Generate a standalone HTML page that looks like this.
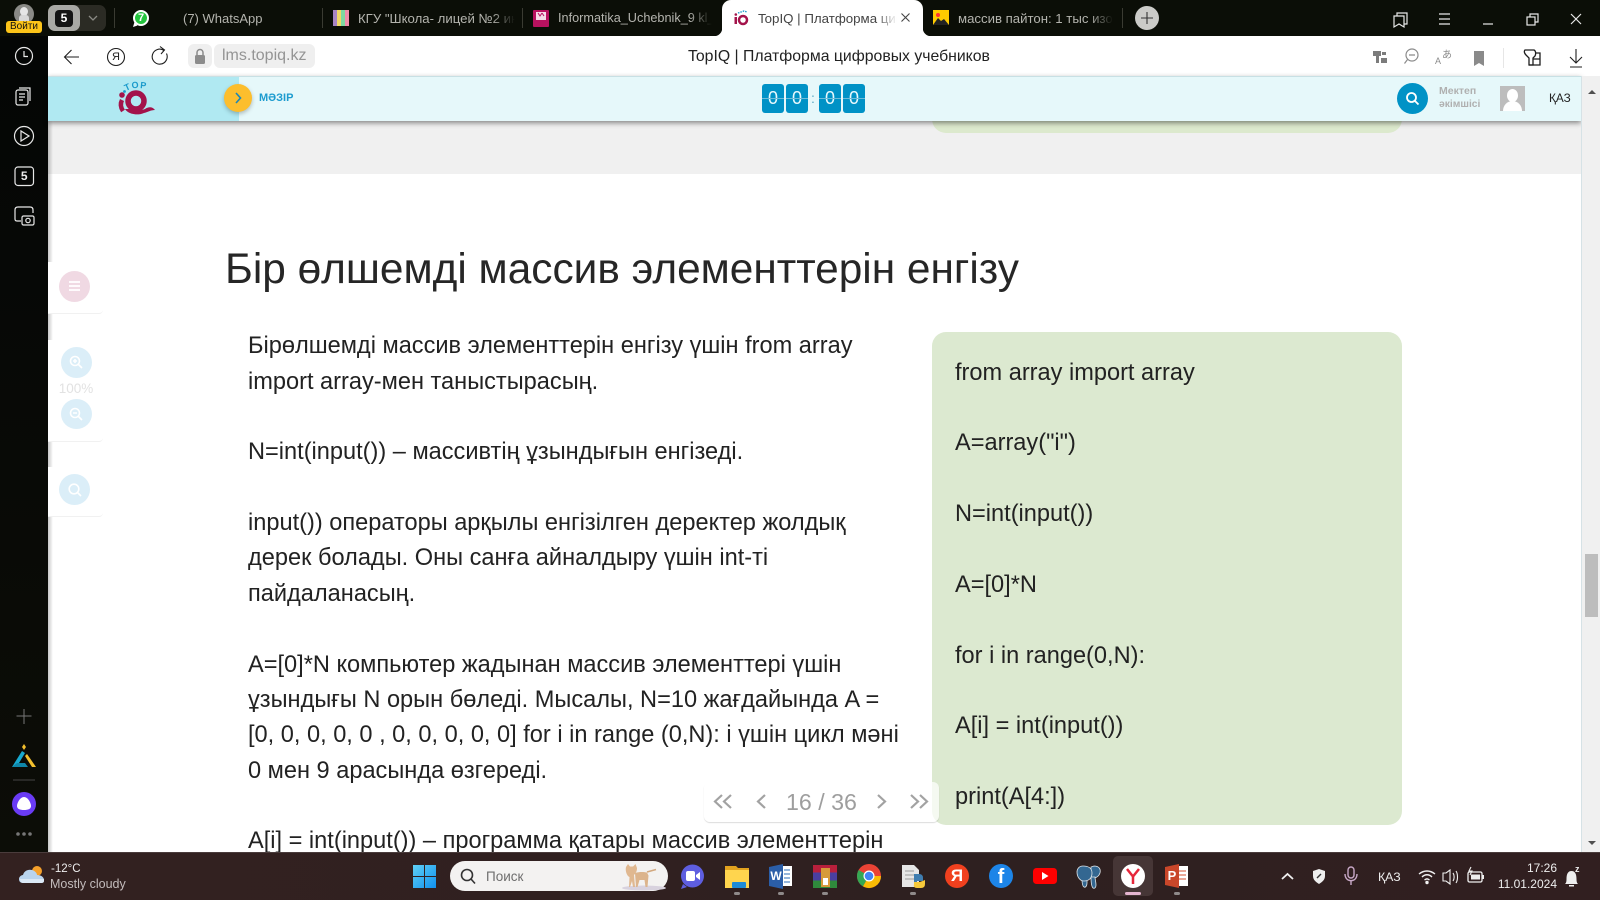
<!DOCTYPE html>
<html lang="kk"><head><meta charset="utf-8"><title>TopIQ</title>
<style>
*{box-sizing:border-box}
html,body{margin:0;padding:0;width:1600px;height:900px;overflow:hidden;background:#fff;font-family:"Liberation Sans",sans-serif}
.a{position:absolute}
svg{position:absolute;overflow:visible}
.t{position:absolute;white-space:nowrap}
.tab{position:absolute;top:10px;font-size:13px;line-height:17px;color:#b4b4ae;white-space:nowrap;overflow:hidden;-webkit-mask-image:linear-gradient(90deg,#000 85%,transparent);mask-image:linear-gradient(90deg,#000 85%,transparent)}
.sep{position:absolute;top:8px;width:1px;height:20px;background:#3a3b32}
.body{position:absolute;font-size:23.580px;line-height:35.36px;color:#222;white-space:nowrap}
.c{position:absolute;border-radius:50%}
.card{position:absolute;left:48px;width:55px;background:#fff;border-bottom:1px solid #f1f1f1;border-radius:0 0 4px 0}
.dig{position:absolute;top:84px;width:22px;height:29px;background:#0092c6;border-radius:3px;color:#e8f8fc;font-size:18px;line-height:29px;text-align:center}
.dig:after{content:"";position:absolute;left:0;right:0;top:14px;height:1px;background:#6dbcd9}
.dot{position:absolute;top:892px;width:6px;height:2.5px;border-radius:2px;background:#8f8a8a}
</style></head><body>

<!-- frame dark -->
<div class="a" style="left:0;top:0;width:1600px;height:36px;background:#0b0e07"></div>
<div class="a" style="left:0;top:36px;width:48px;height:816px;background:linear-gradient(#040605,#0c0d07)"></div>

<!-- top left profile -->
<div class="c" style="left:14px;top:4px;width:20px;height:20px;background:#8a8a86"></div>
<div class="c" style="left:20px;top:7px;width:8px;height:9px;background:#e6e6e6"></div>
<div class="a" style="left:19px;top:15px;width:10px;height:6px;background:#d8d8d8;border-radius:3px 3px 0 0"></div>
<div class="t" style="left:6px;top:21px;width:36px;height:12px;background:#fcc419;border-radius:3px;color:#111;font-size:10px;line-height:12px;text-align:center">Войти</div>

<!-- tab group -->
<div class="a" style="left:48px;top:5px;width:58px;height:26px;background:#2b2b24;border-radius:7px"></div>
<div class="a" style="left:48px;top:5px;width:32px;height:26px;background:#a9a9a5;border-radius:7px"></div>
<div class="t" style="left:55px;top:10px;width:18px;height:17px;background:#141414;border-radius:4px;color:#fff;font-size:12px;font-weight:bold;line-height:17px;text-align:center">5</div>
<svg style="left:0;top:0" width="1" height="1"><path d="M89 16l4 4 4-4" fill="none" stroke="#8a8a84" stroke-width="1.3"/></svg>
<div class="sep" style="left:114px"></div>

<!-- whatsapp -->
<div class="c" style="left:133px;top:10px;width:16px;height:16px;background:#25c53f;border:2px solid #fff"></div>
<svg style="left:0;top:0" width="1" height="1"><path d="M133 27l1.500-5 3 3.500z" fill="#fff"/></svg>
<div class="t" style="left:133px;top:10px;width:16px;text-align:center;font-size:11px;font-weight:bold;line-height:16px;color:#fff">7</div>
<div class="tab" style="left:183px;width:90px;-webkit-mask-image:none;mask-image:none">(7) WhatsApp</div>
<div class="sep" style="left:322px"></div>

<!-- kgu -->
<svg style="left:333px;top:10px" width="16" height="16"><rect x="0" width="4" height="16" fill="#a884c4"/><rect x="4" width="4" height="16" fill="#f0d868"/><rect x="8" width="4" height="16" fill="#7ed8a0"/><rect x="12" width="4" height="16" fill="#f08caa"/></svg>
<div class="tab" style="left:358px;width:157px;font-size:13.200px">КГУ "Школа- лицей №2 ин</div>
<div class="sep" style="left:522px"></div>

<!-- pdf -->
<svg style="left:533px;top:10px" width="16" height="16"><rect width="16" height="17" rx="1" fill="#b8125f"/><rect x="3" y="2" width="10" height="8" fill="#f5dce8"/><path d="M5 3l2 3 2-3M9 3l2 3" stroke="#b8125f" fill="none"/></svg>
<div class="tab" style="left:558px;width:154px;font-size:12.700px">Informatika_Uchebnik_9 kl_</div>

<!-- active tab -->
<div class="a" style="left:722px;top:0;width:201px;height:36px;background:#fff;border-radius:9px 9px 0 0"></div>
<div class="a" style="left:714px;top:28px;width:8px;height:8px;background:radial-gradient(circle at 0 0,#0b0e07 8px,#fff 8.5px)"></div>
<div class="a" style="left:923px;top:28px;width:8px;height:8px;background:radial-gradient(circle at 100% 0,#0b0e07 8px,#fff 8.5px)"></div>
<svg style="left:733px;top:10px" width="16" height="16" viewBox="0 0 16 16"><circle cx="10" cy="10" r="4" fill="none" stroke="#a3134b" stroke-width="2.5"/><rect x="1.500" y="7" width="2.500" height="7" fill="#a3134b"/><circle cx="2.800" cy="4.500" r="1.300" fill="#a3134b"/><path d="M5 3l3-1 3-1 3 1" stroke="#1a9acb" fill="none" stroke-width="1.400" stroke-dasharray="1.500 1"/></svg>
<div class="tab" style="left:758px;width:139px;color:#444;font-size:13.300px">TopIQ | Платформа цифровых</div>
<svg style="left:0;top:0" width="1" height="1"><path d="M901.500 13.500l8 8m0-8l-8 8" stroke="#444" stroke-width="1.100"/></svg>

<!-- yandex images tab -->
<svg style="left:933px;top:10px" width="16" height="16"><rect width="16" height="15" fill="#ffcc00"/><path d="M0 15l5-7 3 3 3-2 5 6z" fill="#222"/><circle cx="5" cy="5" r="2" fill="#f33"/></svg>
<div class="tab" style="left:958px;width:155px;font-size:13.200px">массив пайтон: 1 тыс изображений</div>
<div class="sep" style="left:1122px"></div>
<div class="c" style="left:1135px;top:6px;width:24px;height:24px;background:#cbcbc8"></div>
<svg style="left:0;top:0" width="1" height="1"><path d="M1147 12v12M1141 18h12" stroke="#333" stroke-width="1.100"/></svg>

<!-- window controls -->
<svg style="left:0;top:0" width="1" height="1" fill="none" stroke="#e8e8e8" stroke-width="1.200">
<path d="M1394 16h10v11l-5-3-5 3z"/><path d="M1397 16v-3h10v11h-3"/>
<path d="M1439 14h11M1439 19h11M1439 24h11"/>
<path d="M1483 24h10"/>
<rect x="1527" y="17" width="8" height="8"/><path d="M1530 17v-3h8v8h-3"/>
<path d="M1571 14l10 10m0-10l-10 10"/>
</svg>

<!-- chrome white -->
<div class="a" style="left:48px;top:36px;width:1552px;height:40px;background:#fff;border-radius:9px 9px 0 0"></div>
<svg style="left:0;top:0" width="1" height="1" fill="none" stroke="#1e1e1e" stroke-width="1.100">
<path d="M79 57H65M71.500 50l-7 7 7 7"/>
<circle cx="116" cy="57" r="8.500"/>
<path d="M166.500 53.500a7.500 7.500 0 1 1-2.500-3M160 46.500l4.500 3.500-3.500 4"/>
</svg>
<div class="t" style="left:108px;top:49px;width:16px;text-align:center;font-size:11px;line-height:16px;color:#222">Я</div>
<div class="a" style="left:188px;top:44px;width:24px;height:24px;background:#efefef;border-radius:6px"></div>
<svg style="left:0;top:0" width="1" height="1"><rect x="195" y="55" width="10" height="9" rx="1.500" fill="#8c8c8c"/><path d="M197 55v-2.500a3 3 0 0 1 6 0V55" fill="none" stroke="#8c8c8c" stroke-width="1.500"/></svg>
<div class="t" style="left:214px;top:44px;width:101px;height:24px;background:#efefef;border-radius:6px;color:#949494;font-size:16px;line-height:24px;padding-left:8px">lms.topiq.kz</div>
<div class="t" style="left:688px;top:47px;font-size:15.800px;line-height:20px;color:#222">TopIQ | Платформа цифровых учебников</div>

<svg style="left:0;top:0" width="1" height="1" fill="none" stroke="#8b8b8b" stroke-width="1.200">
<path d="M1373 51h8v5h-2v7h-3v-7h-3z" fill="#7c7c7c" stroke="none"/><rect x="1381" y="58" width="6" height="5" fill="#7c7c7c" stroke="none"/><rect x="1382" y="52" width="4" height="3" fill="#7c7c7c" stroke="none"/>
<circle cx="1412" cy="55" r="6"/><path d="M1409 55h6M1407.500 59.500l-3 4"/>
<path d="M1474 51h10v15l-5-3-5 3z" fill="#8a8a8a" stroke="none"/>
</svg>
<div class="t" style="left:1435px;top:56px;font-size:9px;line-height:11px;color:#8b8b8b">A</div>
<div class="t" style="left:1442px;top:48px;font-size:10px;line-height:12px;color:#8b8b8b;font-family:'Noto Sans CJK JP',sans-serif">あ</div>
<div class="a" style="left:1503px;top:48px;width:1px;height:20px;background:#e6e6e6"></div>
<svg style="left:0;top:0" width="1" height="1" fill="none" stroke="#1e1e1e" stroke-width="1.300">
<path d="M1525 50h9c2 1 2 4 1 6l-2 2v7h-4v-7l-3-3c-2-2-2-4-1-5z"/><path d="M1535 53h5v12h-11M1533 59h7"/>
<path d="M1576 49v14M1570 57l6 6 6-6M1570 67h12" stroke-width="1.100"/>
</svg>

<!-- page -->
<div class="a" style="left:48px;top:76px;width:1533px;height:98px;background:#f0f0f0"></div>
<div class="a" style="left:932px;top:76px;width:470px;height:57px;background:#dce9cd;border-radius:0 0 14px 14px"></div>
<div class="a" style="left:48px;top:174px;width:1533px;height:678px;background:#fff"></div>
<div class="a" style="left:48px;top:121px;width:5px;height:731px;background:linear-gradient(90deg,rgba(0,0,0,.22),transparent)"></div>

<!-- header -->
<div class="a" style="left:48px;top:76px;width:1533px;height:45px;background:#e6f8fa;border-top:1px solid #c8e0e4;box-shadow:0 2px 5px rgba(0,0,0,.45)"></div>
<div class="a" style="left:48px;top:77px;width:191px;height:44px;background:#b0e9f2"></div>
<svg style="left:100px;top:76px" width="70" height="45" viewBox="0 0 70 45">
<circle cx="22" cy="19" r="2.800" fill="#a3134b"/>
<path d="M22 24c-2 4-1 8 1 11" stroke="#a3134b" stroke-width="4.500" fill="none"/>
<circle cx="36" cy="25" r="8" fill="none" stroke="#a3134b" stroke-width="5.500"/>
<path d="M25 33c3 5 12 7 19 4 4-1 7-3 11-3-3-4-7-3-10-1-3 1-5 1-7 0" fill="#a3134b"/>
<circle cx="24.500" cy="15.500" r="1.400" fill="#1a9acb"/>
<text x="26" y="15" font-size="9" font-weight="bold" fill="#1a9acb" transform="rotate(-25 26 15)" font-family="Liberation Sans">T</text>
<text x="32" y="12.500" font-size="9" font-weight="bold" fill="#1a9acb" transform="rotate(-8 32 12.500)" font-family="Liberation Sans">O</text>
<text x="40" y="12" font-size="9" font-weight="bold" fill="#1a9acb" transform="rotate(6 40 12)" font-family="Liberation Sans">P</text>
</svg>
<div class="c" style="left:224px;top:84px;width:28px;height:28px;background:#fcbe2d;box-shadow:0 2px 4px rgba(0,0,0,.25)"></div>
<svg style="left:0;top:0" width="1" height="1"><path d="M236 93l4.500 5-4.500 5" fill="none" stroke="#1a86b8" stroke-width="1.600"/></svg>
<div class="t" style="left:259px;top:91px;font-size:11px;font-weight:bold;line-height:14px;color:#1d9ccf">МӘЗІР</div>
<div class="dig" style="left:762px">0</div><div class="dig" style="left:786px">0</div>
<div class="t" style="left:811px;top:88px;font-size:14px;line-height:20px;color:#5aa9c4">:</div>
<div class="dig" style="left:819px">0</div><div class="dig" style="left:843px">0</div>
<div class="c" style="left:1397px;top:83px;width:31px;height:31px;background:#0092c6"></div>
<svg style="left:0;top:0" width="1" height="1" fill="none" stroke="#fff" stroke-width="1.800"><circle cx="1411.500" cy="97.500" r="4.500"/><path d="M1415 101l3.500 3.500"/></svg>
<div class="t" style="left:1439px;top:84px;font-size:10.500px;font-weight:bold;line-height:14px;color:#b0b0b0">Мектеп</div>
<div class="t" style="left:1439px;top:98px;font-size:10.300px;font-weight:bold;line-height:14px;color:#b0b0b0">әкімшісі</div>
<div class="a" style="left:1500px;top:86px;width:25px;height:25px;background:#bdbdbd;overflow:hidden">
<div class="c" style="left:7px;top:3px;width:11px;height:13px;background:#fff"></div>
<div class="c" style="left:3px;top:15px;width:19px;height:20px;background:#fff"></div></div>
<div class="t" style="left:1549px;top:91px;font-size:11.800px;line-height:15px;color:#222">ҚАЗ</div>

<!-- scrollbar -->
<div class="a" style="left:1581px;top:76px;width:19px;height:776px;background:#f0f0f0;border-left:1px solid #d6e2e6"></div>
<div class="a" style="left:1585px;top:554px;width:13px;height:63px;background:#bdbdbd"></div>
<svg style="left:0;top:0" width="1" height="1" fill="#505050"><path d="M1588 94l4-4 4 4zM1588 841l4 4 4-4z"/></svg>

<!-- left tool cards -->
<div class="card" style="top:262px;height:52px"></div>
<div class="c" style="left:59px;top:271px;width:31px;height:31px;background:#f0d9e3"></div>
<svg style="left:0;top:0" width="1" height="1"><path d="M69 282h11M69 286h11M69 290h11" stroke="#fff" stroke-width="1.700"/></svg>
<div class="card" style="top:340px;height:102px"></div>
<div class="c" style="left:61px;top:347px;width:31px;height:31px;background:#dbeef8"></div>
<div class="t" style="left:56px;top:381px;width:40px;text-align:center;font-size:13.500px;line-height:16px;color:#e2e2e2">100%</div>
<div class="c" style="left:61px;top:399px;width:31px;height:30px;background:#dbeef8"></div>
<div class="card" style="top:467px;height:50px"></div>
<div class="c" style="left:59px;top:474px;width:31px;height:31px;background:#dbeef8"></div>
<svg style="left:0;top:0" width="1" height="1" fill="none" stroke="#fff" stroke-width="1.600">
<circle cx="75" cy="361" r="4.500"/><path d="M78.500 364.500l3.500 3.500M73 361h4M75 359v4"/>
<circle cx="75" cy="413" r="4.500"/><path d="M78.500 416.500l3.500 3.500M73 413h4"/>
<circle cx="74" cy="489" r="4.800"/><path d="M77.500 492.500l3.500 3.500"/>
</svg>

<!-- sidebar icons -->
<svg style="left:0;top:0" width="1" height="1" fill="none" stroke="#e8e8e8" stroke-width="1.200">
<circle cx="24" cy="56" r="8.500"/><path d="M24 51v5.500h4"/>
<rect x="16" y="90" width="12" height="15" rx="2"/><path d="M19 88h11v13M19 94h6M19 97h6M19 100h4"/>
<circle cx="24" cy="136" r="9.500"/><path d="M21 131v10l8-5z"/>
<rect x="15" y="167" width="18.500" height="18.500" rx="3"/>
<path d="M21 221h-4q-2 0-2 -2v-9q0-3 3-3h12q3 0 3 3v3"/><rect x="22" y="216" width="12" height="9" rx="1.500"/><circle cx="28" cy="220.500" r="2.200"/>
<path d="M24 709v15M16.500 716h15" stroke="#777" stroke-width="1"/>
<path d="M13 780h22" stroke="#444" stroke-width="1"/>
</svg>
<div class="t" style="left:15px;top:167px;width:18.500px;text-align:center;font-size:12px;font-weight:bold;line-height:18.500px;color:#eee">5</div>
<svg style="left:0;top:0" width="1" height="1">
<path d="M12 767l10-16 3 2-6 10h5l2 4z" fill="#17a9cf"/><path d="M17 763h8l3 4H12z" fill="#0f86a8"/><path d="M25 756l2-2 9 13h-4z" fill="#f3c02e"/><path d="M24 744l2 3-2 3-2-3z" fill="#f3c02e"/>
<circle cx="24" cy="804" r="12" fill="#6a3bf5"/><path d="M24 797c4 0 7 6 7 9s-3 4-7 4-7-1-7-4 3-9 7-9z" fill="#fff"/>
<circle cx="18" cy="834" r="1.800" fill="#777"/><circle cx="24" cy="834" r="1.800" fill="#777"/><circle cx="30" cy="834" r="1.800" fill="#777"/>
</svg>

<!-- content -->
<div class="t" style="left:225px;top:243px;font-size:42.400px;line-height:52px;color:#262626">Бір өлшемді массив элементтерін енгізу</div>
<div class="body" style="left:248px;top:328.300px">Бірөлшемді массив элементтерін енгізу үшін from array<br>import array-мен таныстырасың.<br><br>N=int(input()) – массивтің ұзындығын енгізеді.<br><br>input()) операторы арқылы енгізілген деректер жолдық<br>дерек болады. Оны санға айналдыру үшін int-ті<br>пайдаланасың.<br><br>A=[0]*N компьютер жадынан массив элементтері үшін<br>ұзындығы N орын бөледі. Мысалы, N=10 жағдайында A =<br>[0, 0, 0, 0, 0 , 0, 0, 0, 0, 0] for i in range (0,N): i үшін цикл мәні<br>0 мен 9 арасында өзгереді.<br><br>A[i] = int(input()) – программа қатары массив элементтерін</div>

<div class="a" style="left:932px;top:332px;width:470px;height:493px;background:#dce9d0;border-radius:14px"></div>
<div class="body" style="left:955px;top:354.700px">from array import array<br><br>A=array("i")<br><br>N=int(input())<br><br>A=[0]*N<br><br>for i in range(0,N):<br><br>A[i] = int(input())<br><br>print(A[4:])</div>

<!-- pager -->
<div class="a" style="left:704px;top:782px;width:235px;height:40px;background:rgba(255,255,255,.7);border-radius:6px;box-shadow:0 1px 1px rgba(0,0,0,.14)"></div>
<svg style="left:0;top:0" width="1" height="1" fill="none" stroke="#a2a2a2" stroke-width="2.200">
<path d="M722 795l-7 6.500 7 6.500M731 795l-7 6.500 7 6.500M765 795l-7 6.500 7 6.500M878 795l7 6.500-7 6.500M911 795l7 6.500-7 6.500M920 795l7 6.500-7 6.500"/>
</svg>
<div class="t" style="left:786px;top:788.500px;font-size:23.200px;line-height:26px;color:#9e9e9e">16 / 36</div>

<!-- taskbar -->
<div class="a" style="left:0;top:852px;width:1600px;height:48px;background:linear-gradient(90deg,#332120,#2e2020 60%,#311f20);border-top:1px solid #4a3c3c"></div>
<svg style="left:19px;top:864px" width="26" height="22" viewBox="0 0 26 22">
<circle cx="18" cy="7" r="5" fill="#f5a02b"/><path d="M4 19c-3 0-4-2-4-4s2-4 4-4c1-4 5-6 9-5 3 1 5 3 5 5 4 0 7 2 7 5s-2 3-4 3z" fill="#b9d4ee"/><path d="M1 15h24v2c0 2-2 2-4 2H4c-2 0-3-2-3-4z" fill="#dbe9f6"/>
</svg>
<div class="t" style="left:51px;top:862px;font-size:11.500px;line-height:15px;color:#eee">-12°C</div>
<div class="t" style="left:50px;top:877px;font-size:12.500px;line-height:15px;color:#c3bcbc">Mostly cloudy</div>

<svg style="left:413px;top:865px" width="23" height="23"><defs><linearGradient id="w" x1="0" y1="0" x2="1" y2="1"><stop offset="0" stop-color="#5fd0f5"/><stop offset="1" stop-color="#1090ee"/></linearGradient></defs><path d="M0 0h11v11H0zM12 0h11v11H12zM0 12h11v11H0zM12 12h11v11H12z" fill="url(#w)"/></svg>
<div class="a" style="left:450px;top:861px;width:218px;height:30px;border-radius:15px;background:#f3f2f1"></div>
<svg style="left:0;top:0" width="1" height="1" fill="none" stroke="#333" stroke-width="1.600"><circle cx="467" cy="875" r="5.500"/><path d="M471 879l4 4.500"/></svg>
<div class="t" style="left:486px;top:868px;font-size:13.500px;line-height:17px;color:#6e6e6e">Поиск</div>
<svg style="left:620px;top:862px" width="46" height="29" viewBox="0 0 46 29">
<ellipse cx="24" cy="26" rx="22" ry="2.500" fill="#d8d2de"/>
<path d="M6 5l2-3 2 2.500h3L15.500 2l1.500 4c0 4-2 6-3 7l1 12h-2l-1-6-2 6H9l.5-10C7 14 5 9 6 5z" fill="#e0b890"/><path d="M15 11c5-1.500 9-1 12-.5l1.500 3-1 11.500h-2l-1-7h-5l-2 7h-1.500z" fill="#dcb48c"/><path d="M27 10l9-2.500" stroke="#d2a87e" stroke-width="1.500"/>
</svg>
<svg style="left:0;top:0" width="1" height="1">
<circle cx="692.500" cy="876" r="11.500" fill="#5e5ee0"/><path d="M683 884l-2 5 6-2z" fill="#5e5ee0"/><rect x="686" y="871" width="9" height="10" rx="2" fill="#fff"/><path d="M696 875l4-3v8l-4-3z" fill="#fff"/>
<path d="M725 866h11l2 2h11v20h-24z" fill="#e2a31f"/><rect x="725" y="870" width="24" height="18" fill="#ffd54e"/><rect x="732" y="882" width="14" height="6" rx="1" fill="#1d8bd6"/>
<rect x="775" y="866" width="17" height="20" fill="#fff"/><path d="M784 870h6M784 874h6M784 878h6M784 882h6" stroke="#2b6cb8"/><path d="M769 867l14-3v25l-14-3z" fill="#2b5ea8"/>
<rect x="813" y="865" width="24" height="7.500" fill="#b8203c"/><rect x="813" y="872.500" width="24" height="8" fill="#4a3fa0"/><rect x="813" y="880.500" width="24" height="7.500" fill="#2f8a3c"/><rect x="821" y="868" width="9" height="19" fill="#d69a3a"/><rect x="823" y="878" width="5" height="7" fill="#fff"/>
<circle cx="869" cy="876" r="12" fill="#ea4335"/><path d="M869 876L858.600 870a12 12 0 0 0 4.400 16.400z" fill="#34a853"/><path d="M869 876l-6 10.400A12 12 0 0 0 881 876z" fill="#f9bc05"/><circle cx="869" cy="876" r="5.500" fill="#fff"/><circle cx="869" cy="876" r="4.300" fill="#4285f4"/>
<path d="M902 865h12l5 5v17h-17z" fill="#e6e6e6"/><path d="M905 871h9M905 875h9M905 879h9" stroke="#999"/><path d="M914 874h5q4 0 4 4v3h-6v2h-3z" fill="#3f7db0"/><path d="M925 880v4q0 4-4 4h-4q-4 0-3-4v-2h6z" fill="#f6c93b"/>
<circle cx="957" cy="876" r="12" fill="#f0401e"/>
<circle cx="1001" cy="876" r="12" fill="#1d85e8"/>
<rect x="1033" y="868" width="24" height="16" rx="3.500" fill="#f00"/><path d="M1042 872v8l6.500-4z" fill="#fff"/>
<g fill="#336791" stroke="#dfe6ea" stroke-width=".8"><path d="M1094 866c5 0 7 3 6 7-1 3-3 4-5 5l-4 1v-12z"/><path d="M1091 877c0 4 0 9 2 11 2 1 3-1 3-3 0-3-1-6-1-8z"/><path d="M1082 879c0 3 0 7 2 8s3-2 3-4v-4z"/><path d="M1083 866c-4 0-6 3-6 6 0 5 3 9 7 9 5 0 8-3 8-8 0-5-4-7-9-7z"/></g>
</svg>
<div class="t" style="left:769px;top:868px;width:14px;text-align:center;font-size:12px;font-weight:bold;line-height:17px;color:#fff">W</div>
<div class="t" style="left:945px;top:864px;width:24px;text-align:center;font-size:17px;font-weight:bold;line-height:24px;color:#fff">Я</div>
<div class="t" style="left:989px;top:864px;width:24px;text-align:center;font-size:20px;font-weight:bold;line-height:26px;color:#fff">f</div>
<div class="a" style="left:1113px;top:856px;width:40px;height:40px;background:#463636;border-radius:5px"></div>
<svg style="left:0;top:0" width="1" height="1">
<circle cx="1133" cy="876" r="12" fill="#fff"/><path d="M1127 869l6 7.500 6-7.500M1133 876v8" fill="none" stroke="#e6263a" stroke-width="2.500"/>
<rect x="1177" y="866" width="11" height="20" fill="#fff"/><path d="M1178 871h8M1178 875h8M1178 879h8" stroke="#d45030"/><path d="M1165 867l14-3v24l-14-3z" fill="#c9472a"/>
</svg>
<div class="t" style="left:1166px;top:867px;width:12px;text-align:center;font-size:13px;font-weight:bold;line-height:18px;color:#fff">P</div>
<div class="a" style="left:1125px;top:892px;width:16px;height:3px;border-radius:2px;background:#e5b5d0"></div>
<div class="dot" style="left:734px"></div><div class="dot" style="left:778px"></div><div class="dot" style="left:822px"></div><div class="dot" style="left:910px"></div><div class="dot" style="left:1174px"></div>

<!-- tray -->
<svg style="left:0;top:0" width="1" height="1" fill="none" stroke="#f0f0f0" stroke-width="1.400">
<path d="M1282 879l5.500-5 5.500 5" stroke-width="1.800"/>
<path d="M1319 869l6 2v5c0 4-3 6-6 8-3-2-6-4-6-8v-5z" fill="#eee" stroke="none"/>
<path d="M1317 878l4-4" stroke="#333"/>
<rect x="1348" y="867" width="6" height="11" rx="3" stroke="#c9a9c8"/><path d="M1345 874c0 9 12 9 12 0M1351 881v4" stroke="#c9a9c8"/>
<path d="M1419 874c5-4 11-4 16 0M1422 877c3-3 7-3 10 0M1424.500 880c2-1.500 3-1.500 5 0"/><circle cx="1427" cy="882.500" r="1" fill="#fff"/>
<path d="M1443 873h3l4-3v14l-4-3h-3zM1453 873c1.500 2 1.500 6 0 8M1456 871c2 3 2 9 0 12" stroke-width="1.100"/>
<rect x="1468" y="872" width="14" height="10" rx="1.500" stroke-width="1.300"/><rect x="1471" y="874.500" width="9" height="5" fill="#eee" stroke="none"/><path d="M1483 875v4" stroke-width="2"/><path d="M1471 867l-2 4h3l-2 4" stroke-width="1.100"/>
</svg>
<div class="t" style="left:1378px;top:869px;font-size:12.300px;line-height:16px;color:#eee">ҚАЗ</div>
<div class="t" style="left:1490px;top:860px;width:67px;text-align:right;font-size:12px;line-height:16px;color:#eee">17:26</div>
<div class="t" style="left:1490px;top:876px;width:67px;text-align:right;font-size:12px;line-height:16px;color:#eee">11.01.2024</div>
<svg style="left:0;top:0" width="1" height="1"><path d="M1565 884c1-1 1.500-2 1.500-5 0-5 1.500-8 5-8s5 3 5 8c0 3 .5 4 1.500 5zM1569 885h5v1.500h-5z" fill="#eee"/></svg>
<div class="t" style="left:1575px;top:864px;font-size:9px;font-weight:bold;line-height:10px;color:#eee">z</div>
</body></html>
